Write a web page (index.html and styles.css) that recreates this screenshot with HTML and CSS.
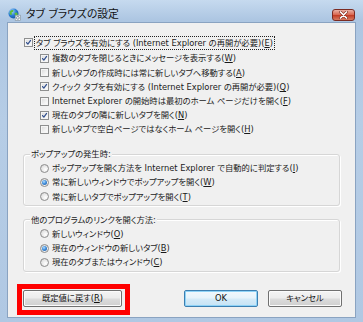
FILE: index.html
```html
<!DOCTYPE html>
<html lang="ja">
<head>
<meta charset="utf-8">
<title>タブ ブラウズの設定</title>
<link rel="stylesheet" href="styles.css">
</head>
<body>
<div class="window">
  <div class="titlebar">
    <svg class="app-icon" viewBox="0 0 13 13" aria-hidden="true">
      <defs>
        <radialGradient id="gl" cx="0.35" cy="0.3" r="0.8">
          <stop offset="0" stop-color="#a8d8ff"/>
          <stop offset="0.5" stop-color="#2b7fd4"/>
          <stop offset="1" stop-color="#0b4a9a"/>
        </radialGradient>
      </defs>
      <circle cx="5.5" cy="5.5" r="5" fill="url(#gl)"/>
      <path d="M2 3.5 Q3.5 1.5 5.5 2.2 L5 4 L3.5 4.5 L4 6.5 L2.5 7 Q1 5.5 2 3.5Z" fill="#5fbf3a"/>
      <path d="M6.5 5 L9 4.5 Q10.3 6 9.5 8 L7.5 9 L7 7Z" fill="#5fbf3a"/>
      <rect x="7.2" y="7.2" width="5.3" height="5.3" fill="#f4f6f8" stroke="#7a8a99" stroke-width="0.6"/>
      <circle cx="9.85" cy="9.85" r="1.4" fill="none" stroke="#6e7f90" stroke-width="0.8"/>
    </svg>
    <span class="title">タブ ブラウズの設定</span>
    <span class="close">
      <svg viewBox="0 0 11 8" aria-hidden="true">
        <path d="M2.5 1 L8.5 7 M8.5 1 L2.5 7" stroke="#7a2a1e" stroke-width="2.8" stroke-linecap="round"/>
        <path d="M2.5 1 L8.5 7 M8.5 1 L2.5 7" stroke="#ffffff" stroke-width="1.7" stroke-linecap="round"/>
      </svg>
    </span>
  </div>

  <div class="client">
    <div class="opt main">
      <span class="cb"><svg viewBox="0 0 9 9"><path d="M2 4.6 L3.7 6.6 L7.2 1.8" class="tick"/></svg></span>
      <span class="label focus">タブ ブラウズを有効にする (Internet Explorer の再開が必要)(<u>E</u>)</span>
    </div>

    <div class="subopts">
      <div class="opt">
        <span class="cb"><svg viewBox="0 0 9 9"><path d="M2 4.6 L3.7 6.6 L7.2 1.8" class="tick"/></svg></span>
        <span class="label">複数のタブを閉じるときにメッセージを表示する(<u>W</u>)</span>
      </div>
      <div class="opt">
        <span class="cb"></span>
        <span class="label">新しいタブの作成時には常に新しいタブへ移動する(<u>A</u>)</span>
      </div>
      <div class="opt">
        <span class="cb"><svg viewBox="0 0 9 9"><path d="M2 4.6 L3.7 6.6 L7.2 1.8" class="tick"/></svg></span>
        <span class="label">クイック タブを有効にする (Internet Explorer の再開が必要)(<u>Q</u>)</span>
      </div>
      <div class="opt">
        <span class="cb"></span>
        <span class="label">Internet Explorer の開始時は最初のホーム ページだけを開く(<u>F</u>)</span>
      </div>
      <div class="opt">
        <span class="cb"><svg viewBox="0 0 9 9"><path d="M2 4.6 L3.7 6.6 L7.2 1.8" class="tick"/></svg></span>
        <span class="label">現在のタブの隣に新しいタブを開く(<u>N</u>)</span>
      </div>
      <div class="opt">
        <span class="cb"></span>
        <span class="label">新しいタブで空白ページではなくホーム ページを開く(<u>H</u>)</span>
      </div>
    </div>

    <fieldset class="group g1">
      <legend>ポップアップの発生時:</legend>
      <div class="radios">
        <div class="opt"><span class="rb"></span><span class="label">ポップアップを開く方法を Internet Explorer で自動的に判定する(<u>I</u>)</span></div>
        <div class="opt"><span class="rb on"></span><span class="label">常に新しいウィンドウでポップアップを開く(<u>W</u>)</span></div>
        <div class="opt"><span class="rb"></span><span class="label">常に新しいタブでポップアップを開く(<u>T</u>)</span></div>
      </div>
    </fieldset>

    <fieldset class="group g2">
      <legend>他のプログラムのリンクを開く方法:</legend>
      <div class="radios">
        <div class="opt"><span class="rb"></span><span class="label">新しいウィンドウ(<u>O</u>)</span></div>
        <div class="opt"><span class="rb on"></span><span class="label">現在のウィンドウの新しいタブ(<u>B</u>)</span></div>
        <div class="opt"><span class="rb"></span><span class="label">現在のタブまたはウィンドウ(<u>C</u>)</span></div>
      </div>
    </fieldset>

    <div class="buttons">
      <div class="highlight">
        <button class="btn reset">既定値に戻す(<u>R</u>)</button>
      </div>
      <button class="btn ok">OK</button>
      <button class="btn cancel">キャンセル</button>
    </div>
  </div>
</div>
</body>
</html>
```

FILE: styles.css
```css
* { box-sizing: border-box; }

html, body {
  margin: 0;
  padding: 0;
}

body {
  width: 363px;
  height: 322px;
  overflow: hidden;
  font-family: "DejaVu Sans", "Noto Sans CJK JP", sans-serif;
  font-size: 8.3px;
  color: #1a1a1a;
  font-feature-settings: "palt";
}

.window {
  height: 322px;
  display: flex;
  flex-direction: column;
  padding: 0 7px 4px 7px;
  background: linear-gradient(to bottom, #c6daef 0px, #adc6e2 20px, #b6cde6 120px, #b0c8e3 100%);
}

.titlebar {
  height: 22px;
  flex: none;
  display: flex;
  align-items: center;
  padding-top: 7px;
}

.app-icon {
  width: 13px;
  height: 13px;
  margin-left: 1px;
  flex: none;
}

.title {
  flex: 1;
  margin-left: 5px;
  font-size: 10.8px;
  line-height: 14px;
  color: #111;
}

.close {
  width: 23px;
  height: 12px;
  margin-right: 1px;
  border: 1px solid #7b2b22;
  border-radius: 3px;
  background: linear-gradient(#eab0a4 0%, #d8664f 48%, #c23a22 52%, #d67b62 100%);
  display: flex;
  align-items: center;
  justify-content: center;
}

.close svg {
  width: 11px;
  height: 8px;
}

.client {
  flex: 1;
  background: #f0f0f0;
  border: 1px solid #8aa3c1;
  padding-top: 12.5px;
}

.opt {
  display: flex;
  align-items: center;
  height: 14.2px;
  white-space: nowrap;
}

.label {
  line-height: 12px;
}

u {
  text-decoration: underline;
  text-underline-offset: 1px;
}

.main {
  height: 14px;
  margin-left: 16px;
}

.main .cb {
  margin-right: 1px;
}

.focus {
  border: 1px dotted #222;
  padding: 0 1px 0 1px;
}

.subopts {
  margin-top: 1.9px;
  margin-left: 32px;
}

.cb {
  width: 9px;
  height: 9px;
  flex: none;
  margin-right: 3px;
  border: 1px solid #8e8f8f;
  background: linear-gradient(135deg, #d8d8d8 0%, #f2f2f2 60%, #ffffff 100%);
  box-shadow: inset 0 0 0 1px #f5f5f5;
  display: flex;
}

.cb svg {
  width: 7px;
  height: 7px;
}

.tick {
  fill: none;
  stroke: #33518f;
  stroke-width: 1.6;
  stroke-linecap: round;
  stroke-linejoin: round;
}

.rb {
  width: 9px;
  height: 9px;
  flex: none;
  margin-right: 3px;
  border: 1px solid #8c8c8c;
  border-radius: 50%;
  background: radial-gradient(circle at 65% 65%, #ffffff 0%, #ececec 45%, #cfcfcf 100%);
  display: flex;
  align-items: center;
  justify-content: center;
}

.rb.on::after {
  content: "";
  width: 5px;
  height: 5px;
  border-radius: 50%;
  background: radial-gradient(circle at 40% 35%, #b8e0ff 0%, #3f8edc 45%, #1b4f95 100%);
}

.group {
  margin: 0 15px;
  padding: 0 0 1.7px 6px;
  border: 1px solid #d6d6d6;
  border-radius: 3px;
  box-shadow: inset 1px 1px 0 #ffffff, 1px 1px 0 #ffffff;
  min-inline-size: 0;
}

.group legend {
  padding: 0 1px;
  line-height: 12px;
  background: #f0f0f0;
}

.g1 {
  margin-top: 11.9px;
}

.g1 .radios {
  margin-top: 0.7px;
}

.g2 {
  margin-top: 7.5px;
  padding-bottom: 2px;
}

.g2 .radios {
  margin-top: 0.9px;
}

.radios {
  margin-left: 10px;
}

.buttons {
  display: flex;
  align-items: flex-start;
  margin-top: 11.5px;
  padding: 0 13px 0 9px;
}

.highlight {
  border: 5px solid #ff0000;
  padding: 1px 3px 3px 1px;
  background: #f0f0f0;
}

.btn {
  height: 17px;
  padding: 0;
  font-family: inherit;
  font-size: 8.3px;
  font-feature-settings: "palt";
  color: #111;
  line-height: 15px;
  border: 1px solid #707070;
  border-radius: 2px;
  background: linear-gradient(#f4f4f4 0%, #ececec 48%, #dcdcdc 52%, #cfcfcf 100%);
  box-shadow: inset 0 0 0 1px #fbfbfb;
}

.reset {
  width: 99px;
  display: block;
}

.ok {
  width: 74px;
  margin-left: auto;
  margin-top: 6px;
  border-color: #3c7fb1;
  background: linear-gradient(#f1f8fd 0%, #e6f3fb 48%, #d5ebf8 52%, #c6e3f5 100%);
  box-shadow: inset 0 0 0 1px #8fd3f7;
}

.cancel {
  width: 74px;
  margin-left: 10px;
  margin-top: 6px;
}
```
